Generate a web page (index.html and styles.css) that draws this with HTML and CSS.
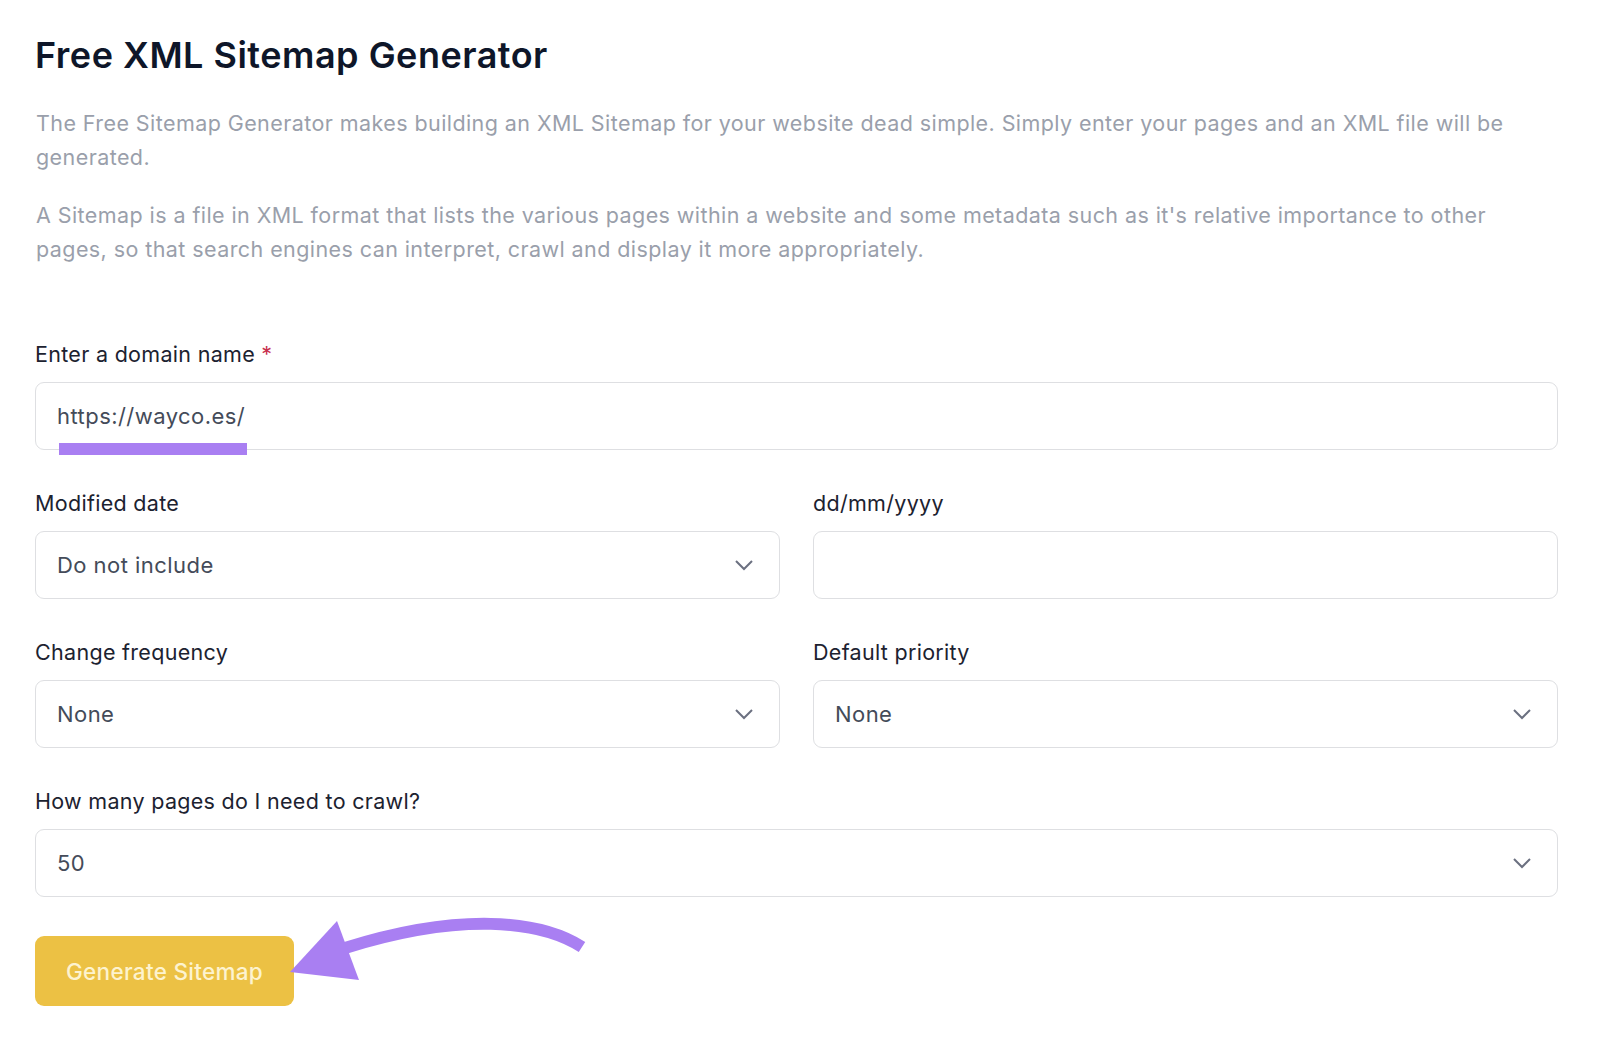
FILE: index.html
```html
<!DOCTYPE html>
<html lang="en">
<head>
<meta charset="utf-8">
<title>Free XML Sitemap Generator</title>
<link rel="stylesheet" href="styles.css">
</head>
<body>
<main class="page">
  <h1 class="title">Free XML Sitemap Generator</h1>
  <p class="intro">The Free Sitemap Generator makes building an XML Sitemap for your website dead simple. Simply enter your pages and an XML file will be generated.</p>
  <p class="intro">A Sitemap is a file in XML format that lists the various pages within a website and some metadata such as it's relative importance to other pages, so that search engines can interpret, crawl and display it more appropriately.</p>

  <form class="form">
    <div class="field">
      <label class="label">Enter a domain name <span class="req">*</span></label>
      <div class="box"><span class="value">https://wayco.es/</span></div>
    </div>
    <div class="row">
      <div class="field">
        <label class="label">Modified date</label>
        <div class="box select"><span class="value">Do not include</span><svg class="chev" viewBox="0 0 20 12"><path d="M2 2l8 8 8-8"/></svg></div>
      </div>
      <div class="field">
        <label class="label">dd/mm/yyyy</label>
        <div class="box"></div>
      </div>
    </div>
    <div class="row">
      <div class="field">
        <label class="label">Change frequency</label>
        <div class="box select"><span class="value">None</span><svg class="chev" viewBox="0 0 20 12"><path d="M2 2l8 8 8-8"/></svg></div>
      </div>
      <div class="field">
        <label class="label">Default priority</label>
        <div class="box select"><span class="value">None</span><svg class="chev" viewBox="0 0 20 12"><path d="M2 2l8 8 8-8"/></svg></div>
      </div>
    </div>
    <div class="field">
      <label class="label">How many pages do I need to crawl?</label>
      <div class="box select"><span class="value">50</span><svg class="chev" viewBox="0 0 20 12"><path d="M2 2l8 8 8-8"/></svg></div>
    </div>
    <div class="actions">
      <button type="button" class="btn">Generate Sitemap</button>
    </div>
  </form>
</main>
<svg class="annot" viewBox="0 0 1600 1048" width="1600" height="1048">
  <rect x="59" y="443" width="188" height="12" fill="#a97ff2"/>
  <path d="M582 947 C540 920 460 912 345 948" fill="none" stroke="#a97ff2" stroke-width="12"/>
  <polygon points="290,972 337,921 359,980" fill="#a97ff2"/>
</svg>
</body>
</html>
```
FILE: styles.css
```css
html, body {
  margin: 0;
  padding: 0;
  background: #ffffff;
}
body {
  font-family: Inter, "Noto Sans", "Liberation Sans", sans-serif;
  position: relative;
  width: 1600px;
  height: 1048px;
  overflow: hidden;
}
.page {
  padding: 33px 42px 0 35px;
}
.title {
  margin: 0;
  font-size: 36px;
  line-height: 44px;
  font-weight: 600;
  color: #0e1629;
  letter-spacing: 0.5px;
}
.intro {
  margin: 29px 0 0 1px;
  max-width: 1490px;
  font-size: 21.5px;
  line-height: 34px;
  letter-spacing: 0.42px;
  color: #9a9fab;
}
.intro + .intro {
  margin-top: 24px;
}
.form {
  margin-top: 73px;
  display: flex;
  flex-direction: column;
  gap: 38px;
}
.row {
  display: grid;
  grid-template-columns: 1fr 1fr;
  column-gap: 33px;
}
.field {
  display: flex;
  flex-direction: column;
}
.label {
  font-size: 21.5px;
  line-height: 30px;
  letter-spacing: 0.3px;
  font-weight: 400;
  color: #1c2230;
  margin-bottom: 13px;
}
.req {
  color: #c8304e;
}
.box {
  box-sizing: border-box;
  height: 68px;
  border: 1.5px solid #dedfe2;
  border-radius: 9px;
  display: flex;
  align-items: center;
  justify-content: space-between;
  padding: 0 25px 0 21px;
}
.value {
  font-size: 22px;
  letter-spacing: 0.45px;
  color: #444b59;
}
.chev {
  width: 20px;
  height: 12px;
  fill: none;
  stroke: #6b7080;
  stroke-width: 2;
}
.actions {
  margin-top: 1px;
}
.btn {
  font-family: Inter, "Noto Sans", "Liberation Sans", sans-serif;
  width: 259px;
  height: 70px;
  border: none;
  border-radius: 9px;
  background: #ecc144;
  color: #fdf3cf;
  font-size: 22.5px;
  letter-spacing: 0.3px;
  font-weight: 500;
  padding: 0;
}
.annot {
  position: absolute;
  left: 0;
  top: 0;
  pointer-events: none;
}
```
